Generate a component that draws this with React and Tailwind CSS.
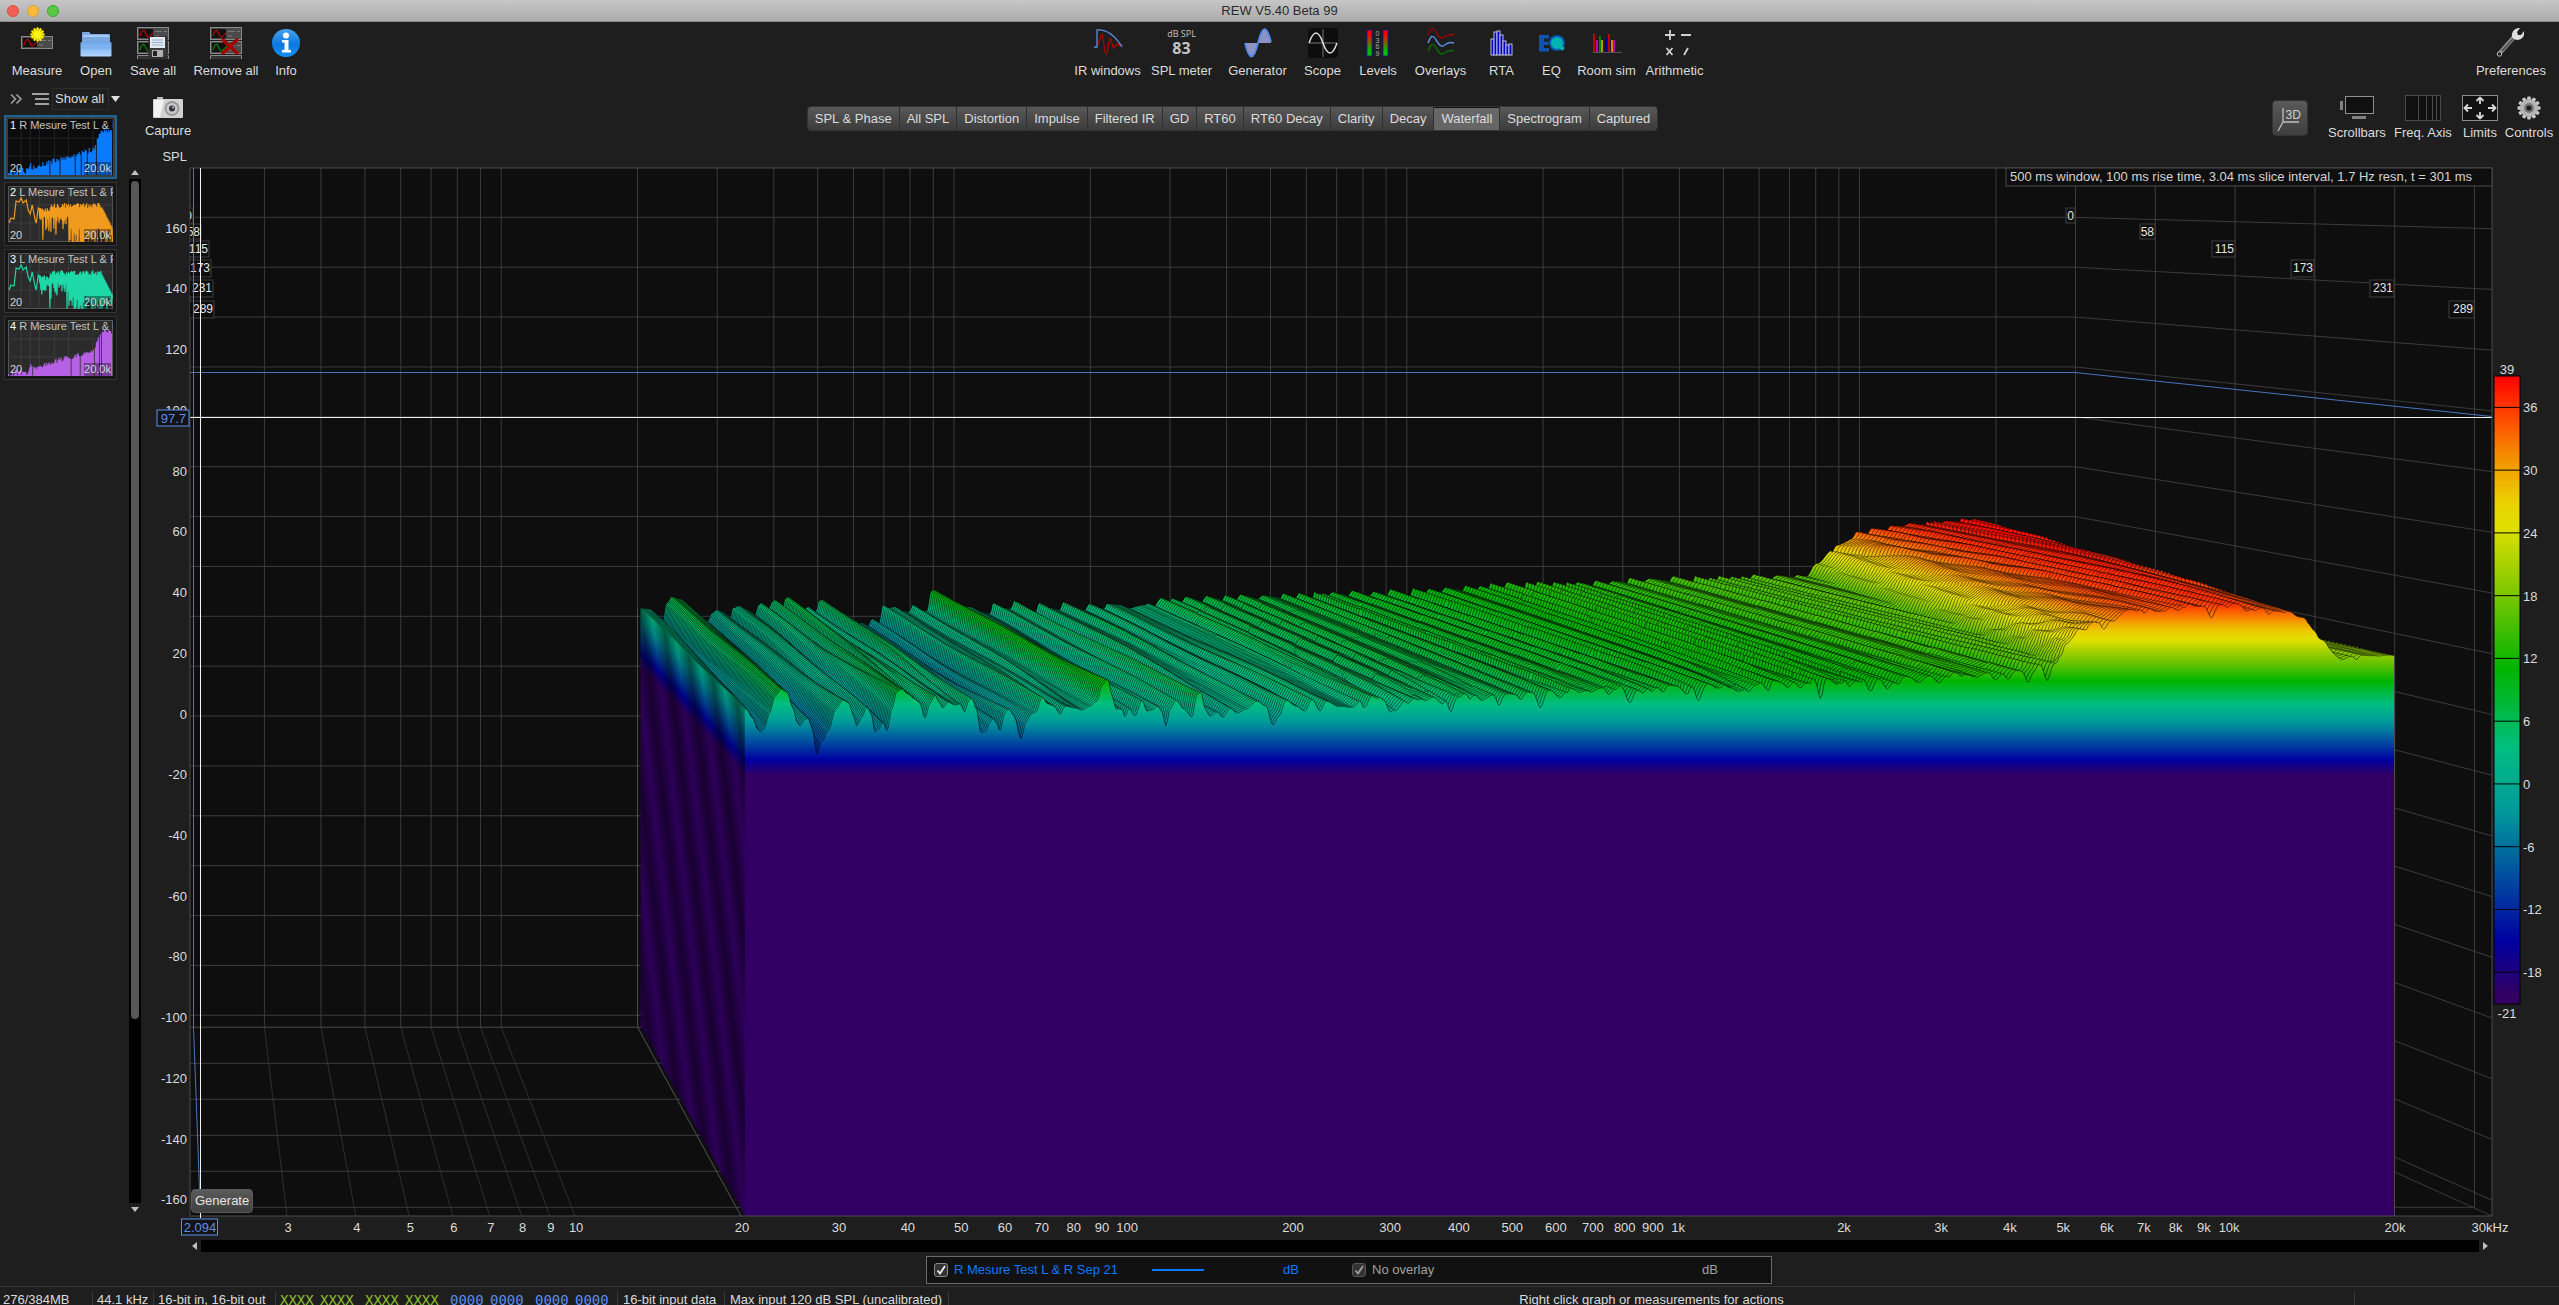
import React, { useMemo } from "react";

/* ---------- plot geometry ---------- */
const FRONT = { x0: 190, perDecade: 551, zero: 714.5, perDb: 3.036 };
const BACK = { x0: 184.7, perDecade: 452.8, zero: 616.3, perDb: 2.4935 };
const TOP = 168;
const BACK_FLOOR = 1027.3;
const FRONT_FLOOR = 1216;
const SLICES = 99;
const FIRST = 1.007;

const mix = (a, b, t) => a + (b - a) * t;
const slice = (t) => ({
  x0: mix(BACK.x0, FRONT.x0, t),
  perDecade: mix(BACK.perDecade, FRONT.perDecade, t),
  zero: mix(BACK.zero, FRONT.zero, t),
  perDb: mix(BACK.perDb, FRONT.perDb, t),
  floor: mix(BACK_FLOOR, FRONT_FLOOR, t),
});

function random(seed) {
  let s = seed;
  return () => {
    s = (s * 1664525 + 1013904223) % 4294967296;
    return s / 4294967296;
  };
}

const LEVEL_STOPS = [
  [39, "#ff0000"],
  [35, "#ff4a00"],
  [30, "#f2a400"],
  [27, "#ebd000"],
  [24.5, "#dfe000"],
  [18, "#78c600"],
  [11, "#00b400"],
  [3.5, "#00be80"],
  [-2.5, "#009a9a"],
  [-10, "#003fa0"],
  [-15, "#0000a0"],
  [-20, "#320064"],
];

/* first slice and last slice outlines, low frequencies */
const BACK_LINE = [
  [637, 608], [650, 609], [659, 622], [663, 621], [666, 604], [672, 597], [680, 599], [695, 612], [708, 621],
  [712, 613], [717, 610], [723, 612], [730, 620], [733, 608], [739, 606], [746, 609], [755, 616], [758, 606],
  [761, 603], [769, 609], [772, 602], [775, 600], [783, 608], [785, 599], [788, 597], [798, 607], [803, 611],
  [808, 607], [816, 612], [819, 601], [822, 600], [832, 606], [845, 620], [852, 624], [862, 623], [868, 626],
  [872, 619], [879, 623], [883, 605], [888, 608], [895, 607], [903, 611], [909, 612], [913, 605], [920, 610],
  [927, 611], [931, 591], [934, 590], [945, 598], [958, 608], [970, 607], [980, 612], [990, 614], [993, 603],
  [1003, 608], [1011, 609], [1014, 601], [1024, 608], [1035, 614], [1039, 603], [1050, 608], [1060, 610],
  [1063, 602], [1073, 607], [1085, 610], [1089, 604], [1104, 609], [1107, 604], [1120, 605], [1130, 609],
  [1145, 606], [1156, 609], [1162, 597], [1173, 600], [1185, 604],
];
const FRONT_LINE = [
  [741, 708], [746, 709], [753, 718], [757, 728], [760, 732], [764, 729], [770, 712], [775, 696], [781, 689],
  [787, 692], [793, 708], [797, 722], [800, 726], [804, 720], [808, 718], [812, 728], [817, 754], [821, 742],
  [829, 730], [835, 710], [843, 700], [849, 703], [853, 715], [857, 726], [861, 718], [867, 707], [871, 713],
  [875, 732], [879, 729], [883, 722], [887, 731], [892, 708], [897, 691], [902, 689], [908, 694], [915, 699],
  [920, 703], [925, 718], [930, 703], [935, 695], [939, 702], [943, 708], [948, 702], [955, 705], [960, 704],
  [965, 712], [968, 701], [972, 698], [976, 708], [981, 733], [986, 731], [990, 722], [993, 718], [997, 724],
  [1000, 731], [1005, 712], [1009, 709], [1014, 716], [1021, 739], [1026, 722], [1031, 714], [1036, 712],
  [1042, 697], [1048, 704], [1054, 706], [1060, 714], [1065, 706], [1075, 708], [1082, 710], [1090, 706],
  [1097, 701], [1102, 685], [1108, 679], [1112, 696], [1116, 709], [1122, 709], [1125, 717], [1129, 708],
  [1135, 716], [1142, 700], [1147, 711], [1152, 710], [1158, 706], [1162, 712], [1166, 726], [1170, 709],
  [1176, 700], [1184, 709], [1192, 717], [1197, 694], [1201, 692], [1205, 709], [1210, 716], [1217, 712],
  [1223, 717], [1230, 708], [1237, 713], [1246, 709], [1257, 701], [1266, 706], [1273, 725], [1279, 716],
  [1286, 700], [1296, 706], [1305, 711], [1312, 699], [1320, 711], [1326, 701], [1340, 707], [1352, 709],
  [1360, 702], [1364, 713], [1372, 694], [1379, 690], [1385, 702], [1391, 720], [1396, 708], [1402, 704],
];
/* [decade back, dB back, decade front, dB front], high frequencies */
const HIGH = [
  [2.15, 6.6, 2.15, 5.2],
  [2.38, 7.9, 2.38, 6.8],
  [2.6, 9.2, 2.6, 9],
  [3.0, 12.6, 3.0, 11.2],
  [3.3, 14.8, 3.3, 13.8],
  [3.58, 16.2, 3.386, 16.6],
  [3.605, 21, 3.395, 20],
  [3.64, 27, 3.405, 24],
  [3.7, 33.5, 3.43, 28],
  [3.76, 35.5, 3.47, 32],
  [3.81, 37, 3.54, 35],
  [3.88, 37.5, 3.62, 36],
  [3.92, 38.6, 3.7, 36.3],
  [3.963, 38.6, 3.805, 34.2],
  [3.975, 36, 3.835, 32],
  [3.985, 30, 3.855, 28],
  [3.99, 24, 3.868, 24.5],
  [3.993, 20, 3.9, 19.3],
  [4.0, 20, 4.0, 19.6],
];

function toLevels(points, g) {
  return points.map(([x, y]) => [(x - g.x0) / g.perDecade, (g.zero - y) / g.perDb]);
}

function sampler(points) {
  return (d) => {
    if (d <= points[0][0]) return points[0][1];
    for (let i = 1; i < points.length; i++) {
      if (d <= points[i][0]) {
        const [a, va] = points[i - 1];
        const [b, vb] = points[i];
        const u = (d - a) / (b - a);
        return mix(va, vb, u * u * (3 - 2 * u));
      }
    }
    return points[points.length - 1][1];
  };
}

function buildSurface() {
  const rnd = random(77);
  const back = sampler(toLevels(BACK_LINE, BACK));
  const front = sampler(toLevels(FRONT_LINE, FRONT));
  const N = 960;
  const ridge = new Array(N + 1).fill(0);
  const dips = new Array(N + 1).fill(0);
  let p = 0;
  while (p <= N) {
    const width = 5 + Math.floor(rnd() * 13);
    const height = 0.9 + rnd() * 2.3;
    for (let k = 0; k < width && p + k <= N; k++) {
      const u = k / width;
      ridge[p + k] = height * (u < 0.18 ? u / 0.18 : 1 - (u - 0.18) / 0.82) - height / 2;
    }
    p += width;
  }
  for (let i = 0; i <= N; i++) ridge[i] += (rnd() - 0.5) * 0.25;
  for (let c = 4; c < N; c += 5 + Math.floor(rnd() * 9)) {
    const depth = rnd() < 0.3 ? 3.5 + rnd() * 3.5 : 0.9 + rnd() * 2;
    const w = 1.6 + rnd() * 1.6;
    for (let i = Math.max(0, c - 8); i <= Math.min(N, c + 8); i++) {
      dips[i] -= depth * Math.exp(-(((i - c) / w) ** 2));
    }
  }
  const slices = [];
  for (let s = 0; s <= SLICES; s++) {
    const t = s / SLICES;
    const g = slice(t);
    const high = sampler(HIGH.map(([db, vb, df, vf]) => [mix(db, df, t), mix(vb, vf, t)]));
    const late = Math.pow(t, 2.2);
    const edge = Math.pow(t, 7);
    const shoulder = mix(3.963, 3.805, t);
    const pts = [];
    for (let i = 0; i <= N; i++) {
      const d = FIRST + ((4 - FIRST) * i) / N;
      const low = mix(back(d), front(d), late) + 2.2 * Math.sin(t * 6.3 + d * 26) * t * (1 - t);
      const k = Math.min(1, Math.max(0, (d - 2.08) / 0.14));
      let v = low;
      if (k > 0) {
        const fade = d > shoulder ? 0.25 : d > 3.4 ? 0.75 : 1;
        const drift = Math.round(6 * Math.sin(d * 9) * t);
        const r = ridge[Math.min(N, Math.max(0, i + drift))];
        v = mix(low, high(d) + (r * (1 - 0.45 * edge) + dips[i] * edge * 0.85) * fade, k);
      }
      pts.push(`${(g.x0 + g.perDecade * d).toFixed(1)},${(g.zero - g.perDb * v).toFixed(1)}`);
    }
    slices.push({ s, g, line: pts.join(" ") });
  }
  return slices;
}

const NAMES = [
  ["3", 3], ["4", 4], ["5", 5], ["6", 6], ["7", 7], ["8", 8], ["9", 9], ["10", 10], ["20", 20], ["30", 30],
  ["40", 40], ["50", 50], ["60", 60], ["70", 70], ["80", 80], ["90", 90], ["100", 100], ["200", 200],
  ["300", 300], ["400", 400], ["500", 500], ["600", 600], ["700", 700], ["800", 800], ["900", 900],
  ["1k", 1000], ["2k", 2000], ["3k", 3000], ["4k", 4000], ["5k", 5000], ["6k", 6000], ["7k", 7000],
  ["8k", 8000], ["9k", 9000], ["10k", 10000], ["20k", 20000],
];
const dec = (f) => Math.log10(f / 2);
const TIMES = [
  ["0", 2066, 208, 15, 9], ["58", 2140, 224, 15, 15], ["115", 2212, 241, 16, 23],
  ["173", 2291, 260, 17, 23], ["231", 2370, 280, 17, 24], ["289", 2449, 301, 17, 25],
];
const LEFT_EDGE = [193, 201, 209, 211, 213, 214];

function LevelScale() {
  const y = (v) => 376 + (39 - v) * 10.46;
  return (
    <g>
      <rect x="2494" y="376" width="26" height="628" fill="url(#scale)" stroke="#000" />
      {[36, 30, 24, 18, 12, 6, 0, -6, -12, -18].map((v) => (
        <g key={v}>
          <line x1="2494" x2="2520" y1={y(v)} y2={y(v)} stroke="#000" />
          <text x="2523" y={y(v) + 5} fill="#dcdcdc">{v}</text>
        </g>
      ))}
      <text x="2507" y="374" textAnchor="middle" fill="#dcdcdc">39</text>
      <text x="2507" y="1018" textAnchor="middle" fill="#dcdcdc">-21</text>
    </g>
  );
}

function Waterfall() {
  const slices = useMemo(buildSurface, []);
  const grid = "#3c3c3c";
  const levels = Array.from({ length: 17 }, (_, i) => 160 - i * 20);
  return (
    <svg viewBox="143 145 2416 1093" className="block h-auto w-full" role="img" aria-label="Waterfall plot" fontSize="13">
      <defs>
        <linearGradient id="scale" x1="0" x2="0" y1="0" y2="1">
          {LEVEL_STOPS.map(([v, c]) => (
            <stop key={v} offset={(39 - v) / 60} stopColor={c} />
          ))}
        </linearGradient>
        <linearGradient id="stops">
          {LEVEL_STOPS.map(([v, c]) => (
            <stop key={v} offset={(39 - v) / 60} stopColor={c} />
          ))}
        </linearGradient>
        {slices.map(({ s, g }) => (
          <linearGradient key={s} id={`level${s}`} gradientUnits="userSpaceOnUse" x1="0" x2="0" y1={g.zero - 39 * g.perDb} y2={g.zero + 21 * g.perDb} href="#stops" />
        ))}
        <linearGradient id="stripes" gradientUnits="userSpaceOnUse" x1="641" y1="700" x2="662" y2="697.5" spreadMethod="repeat">
          <stop offset="0" stopColor="#000" stopOpacity="0.12" />
          <stop offset="0.5" stopColor="#000" stopOpacity="0.52" />
          <stop offset="1" stopColor="#000" stopOpacity="0.12" />
        </linearGradient>
        <clipPath id="plot"><rect x="190" y="168" width="2302" height="1048" /></clipPath>
        <clipPath id="wall">
          <polygon points={`${slices.map(({ line }) => line.split(" ")[0]).join(" ")} 745,1216 640.5,1027`} />
        </clipPath>
      </defs>

      <rect x="190" y="168" width="2302" height="1048" fill="#0e0e0e" />
      <g clipPath="url(#plot)" stroke={grid} fill="none">
        {NAMES.map(([n, f]) => {
          const xb = BACK.x0 + BACK.perDecade * dec(f);
          return (
            <g key={n}>
              <line x1={xb} x2={xb} y1={TOP} y2={BACK_FLOOR} />
              <line x1={xb} x2={190 + 551 * dec(f)} y1={BACK_FLOOR} y2={FRONT_FLOOR} stroke="#303030" />
            </g>
          );
        })}
        {levels.map((v) => (
          <polyline
            key={v}
            points={`190,${BACK.zero - BACK.perDb * v} 2075,${BACK.zero - BACK.perDb * v} 2492,${FRONT.zero - FRONT.perDb * v}`}
          />
        ))}
        <polyline points="190,1027.3 2075,1027.3 2492,1216" />
        {[0, 1, 2, 3, 4, 5].map((i) => (
          <g key={i}>
            <line x1={2075.5 + 79.8 * i} x2={2075.5 + 79.8 * i} y1={TOP} y2={BACK_FLOOR + 36 * i} />
            <line x1="190" x2={2075.5 + 79.8 * i} y1={BACK_FLOOR + 36 * i} y2={BACK_FLOOR + 36 * i} />
          </g>
        ))}
        <polyline points="193.5,168 193.5,1027 200.5,1216" stroke="#4a74c0" />
        <polyline points="190,372.5 2075,372.5 2492,416.5" stroke="#4a74c0" />
      </g>

      <line x1="190" x2="2492" y1="417.5" y2="417.5" stroke="#f4f4f4" />

      <g clipPath="url(#plot)">
        {slices.map(({ s, g, line }) => (
          <g key={s}>
            <polygon points={`${g.x0 + g.perDecade * FIRST},${g.floor} ${line} ${g.x0 + 4 * g.perDecade},${g.floor}`} fill={`url(#level${s})`} />
            <polyline points={line} fill="none" stroke="#000" strokeOpacity="0.66" strokeWidth="0.8" />
          </g>
        ))}
        <g clipPath="url(#wall)">
          <rect x="630" y="590" width="120" height="630" fill="url(#stripes)" />
        </g>
        <line x1="637.5" y1="608" x2="637.5" y2="1027" stroke="#4a4a50" />
        <line x1="637.5" y1="1027" x2="741" y2="1216" stroke="#4a4a50" />
        <line x1="2394.5" y1="656" x2="2394.5" y2="1216" stroke="#4a4a50" />
      </g>

      <rect x="190" y="168" width="2302" height="1048" fill="none" stroke="#4a4a4a" />

      {TIMES.map(([label, x, y, h, w]) => (
        <g key={label}>
          <rect x={x} y={y} width={w} height={h} fill="#0e0e0e" stroke={grid} />
          <text x={x + w - 1} y={y + 12} textAnchor="end" fontSize="12" fill="#e4e4e4">{label}</text>
        </g>
      ))}
      <g clipPath="url(#plot)">
        {TIMES.map(([label, , y, h, w], i) => (
          <g key={label}>
            <rect x={LEFT_EDGE[i] - w} y={y} width={w} height={h} fill="#0e0e0e" stroke={grid} />
            <text x={LEFT_EDGE[i] - 1} y={y + 12} textAnchor="end" fontSize="12" fill="#e4e4e4">{label}</text>
          </g>
        ))}
        <line x1="193.5" x2="193.5" y1="168" y2="320" stroke="#4a74c0" />
      </g>
      <line x1="200.5" x2="200.5" y1="168" y2="1218" stroke="#f4f4f4" />

      <rect x="2006" y="168" width="486" height="18" fill="#0e0e0e" stroke="#4a4a4a" />
      <text x="2010" y="181" fill="#d4d4d4">500 ms window, 100 ms rise time, 3.04 ms slice interval, 1.7 Hz resn, t = 301 ms</text>

      <text x="187" y="161" textAnchor="end" fill="#dcdcdc">SPL</text>
      {levels.map((v) => (
        <text key={v} x="187" y={FRONT.zero - FRONT.perDb * v + 4} textAnchor="end" fill="#dcdcdc">{v}</text>
      ))}
      <rect x="157" y="410" width="32" height="16" fill="#141414" stroke="#5b8def" />
      <text x="186" y="423" textAnchor="end" fill="#5b8def">97.7</text>

      {NAMES.map(([n, f]) => (
        <text key={n} x={191 + 551 * dec(f)} y="1232" textAnchor="middle" fill="#dcdcdc">{n}</text>
      ))}
      <text x="2490" y="1232" textAnchor="middle" fill="#dcdcdc">30kHz</text>
      <rect x="181.5" y="1219" width="36" height="16" fill="#141414" stroke="#5b8def" />
      <text x="200" y="1232" textAnchor="middle" fill="#5b8def">2.094</text>
      <LevelScale />
    </svg>
  );
}

/* ---------- icons ---------- */
function Panel({ y, color }) {
  return (
    <g>
      <rect x="0.5" y={y + 0.5} width="31" height="12" fill="#4a4a4a" stroke="#8a8a8a" />
      <rect x="2" y={y + 2} width="14" height="9" fill="#111" />
      <path d={`M3 ${y + 9}c2-7 4-7 6-2s3 3 7-1`} fill="none" stroke={color} strokeWidth="1.2" />
      <path d={`M18 ${y + 4.5}h7m2 0h3M18 ${y + 9}h4`} stroke="#888" strokeWidth="0.8" />
    </g>
  );
}

const MeasureIcon = () => (
  <svg viewBox="0 0 32 32" className="h-8 w-8">
    <Panel y={9} color="#c00000" />
    <g stroke="#ffee00" strokeWidth="2.4" strokeLinecap="round" transform="translate(16.5 7.500)">
      {[0, 30, 60, 90, 120, 150].map((a) => <line key={a} x1="-6" x2="6" y1="0" y2="0" transform={`rotate(${a})`} />)}
    </g>
    <circle cx="16.5" cy="7.500" r="3.4" fill="#fff700" />
  </svg>
);
const OpenIcon = () => (
  <svg viewBox="0 0 32 32" className="h-8 w-8">
    <defs><linearGradient id="fold" x1="0" x2="0" y1="0" y2="1"><stop offset="0" stopColor="#6ea6ea" /><stop offset="0.5" stopColor="#8bbcf7" /><stop offset="1" stopColor="#b4d8ff" /></linearGradient></defs>
    <path d="M2 15V6q0-1 1-1h6q1 0 1.500 2H29q1 0 1 1v8z" fill="#7aa9e2" />
    <path d="M3 8h26v2H3z" fill="#a5c9f2" />
    <rect x="0.500" y="15" width="31" height="14.500" rx="1" fill="url(#fold)" />
    <path d="M1 21h30" stroke="#74a9ea" />
  </svg>
);
const SaveIcon = () => (
  <svg viewBox="0 0 32 32" className="h-8 w-8">
    <Panel y={0} color="#c00000" /><Panel y={14} color="#008a00" /><path d="M.5 32v-3.500h31V32" fill="#333" stroke="#8a8a8a" />
    <rect x="12" y="10" width="18" height="20" rx="1.500" fill="#3c3c3c" stroke="#222" />
    <rect x="13" y="10" width="15" height="11" fill="#e4eaf2" /><path d="M15 13h11M15 15.500h11M15 18h11" stroke="#7da3c8" strokeWidth="0.800" />
    <rect x="15" y="23" width="11" height="7" fill="#b0b0b0" /><rect x="16" y="24" width="4" height="5" fill="#222" />
  </svg>
);
const RemoveIcon = () => (
  <svg viewBox="0 0 32 32" className="h-8 w-8">
    <Panel y={0} color="#c00000" /><Panel y={14} color="#008a00" /><path d="M.5 32v-3.500h31V32" fill="#333" stroke="#8a8a8a" />
    <path d="M12 12L28 27M28 12L12 27" stroke="#a00000" strokeWidth="3.600" />
  </svg>
);
const InfoIcon = () => (
  <svg viewBox="0 0 32 32" className="h-8 w-8">
    <defs><linearGradient id="inf" x1="0" x2="0" y1="0" y2="1"><stop offset="0" stopColor="#4aa4ee" /><stop offset="0.550" stopColor="#0a78e0" /><stop offset="1" stopColor="#1590f4" /></linearGradient></defs>
    <circle cx="16" cy="16" r="14" fill="url(#inf)" />
    <circle cx="16" cy="8.500" r="3" fill="#fff" />
    <path d="M12 13h6.500v10h2.500v2.500h-9V23h2.500v-7.500H12z" fill="#fff" />
  </svg>
);
const IrIcon = () => (
  <svg viewBox="0 0 32 32" className="h-8 w-8" fill="none">
    <path d="M5 19L8 12 9 9q1-4 2 2l2 13q1 6 2.500 0l2-11q1-3 2 2l1.500 5q1 2 2-1l1.500-2q1-1 2 1.500l2-1 2 .5" stroke="#b00000" strokeWidth="1.300" />
    <path d="M2 20h3V3q14-1 25 17" stroke="#5f8fe0" strokeWidth="1.300" />
  </svg>
);
const SplIcon = () => (
  <span className="flex h-8 flex-col items-center font-['Open_Sans',sans-serif] text-[#c4c4c4]">
    <span className="pt-0.5 text-[9px] leading-[10px]">dB SPL</span>
    <span className="text-[16px] font-bold leading-[18px]">83</span>
  </span>
);
const GenIcon = () => (
  <svg viewBox="0 0 32 32" className="h-8 w-8">
    <path d="M3 16Q9.500 43 16 16T29 16z" fill="#8f93c4" />
    <path d="M3 16Q9.500 43 16 16T29 15" fill="none" stroke="#4f8bea" strokeWidth="1.800" />
  </svg>
);
const ScopeIcon = () => (
  <svg viewBox="0 0 32 32" className="h-8 w-8" fill="none">
    <rect x="1" y="1" width="30" height="30" rx="4" fill="#0d0d0d" />
    <path d="M16 2v28M2 16h28" stroke="#777" />
    <path d="M2 16Q9 -4 16 16T30 16" stroke="#e0e0e0" strokeWidth="1.500" />
  </svg>
);
const LevelsIcon = () => (
  <svg viewBox="0 0 32 32" className="h-8 w-8" fontSize="7" fill="#aaa" textAnchor="middle">
    <defs><linearGradient id="lev" x1="0" x2="0" y1="0" y2="1"><stop offset="0.150" stopColor="#ff0000" /><stop offset="0.800" stopColor="#00c000" /></linearGradient></defs>
    <rect x="5" y="3" width="5" height="26" fill="url(#lev)" stroke="#1818a0" strokeWidth="0.800" />
    <rect x="21" y="3" width="5" height="26" fill="url(#lev)" stroke="#1818a0" strokeWidth="0.800" />
    <text x="15.500" y="9">0</text><text x="15.500" y="15.500">3</text><text x="15.500" y="22">6</text><text x="15.500" y="28.500">9</text>
  </svg>
);
const OverlaysIcon = () => (
  <svg viewBox="0 0 32 32" className="h-8 w-8" fill="none" strokeWidth="1.400">
    {[["#a00000", 0], ["#5f8fe0", 8], ["#007000", 16]].map(([c, y]) => (
      <path key={c} d={`M3 ${y + 8}C6 ${y} 8 ${y} 10.500 ${y + 4}S15 ${y + 12} 18 ${y + 11}S22 ${y + 6} 29 ${y + 8}`} stroke={c} />
    ))}
  </svg>
);
const RtaIcon = () => (
  <svg viewBox="0 0 32 32" className="h-8 w-8" fill="#0000c8" stroke="#d0d0e0" strokeWidth="0.900">
    {[[5, 12], [8, 5], [11, 4], [14, 8], [17, 14], [20, 18], [23, 17]].map(([x, y]) => (
      <rect key={x} x={x} y={y} width="3" height={28 - y} />
    ))}
  </svg>
);
const EqIcon = () => (
  <svg viewBox="0 0 32 32" className="h-8 w-8">
    <path d="M3 8h10v3.500H8v3h4.500V18H8v3h5v3.500H3z" fill="#0a55b0" />
    <circle cx="21" cy="16" r="8" fill="#0a55b0" /><circle cx="21" cy="16" r="6" fill="#00b4b4" />
    <path d="M22 19l4 5 3-3-4-3z" fill="#00b4b4" />
  </svg>
);
const RoomIcon = () => (
  <svg viewBox="0 0 32 32" className="h-8 w-8">
    {[["#c00000", 2, 7], ["#c000c0", 5, 13], ["#008000", 8, 9], ["#c09000", 10, 13], ["#0000a0", 14, 11], ["#c00000", 17, 7], ["#c09000", 20, 13], ["#c000c0", 22, 13]].map(([c, x, y]) => (
      <rect key={x} x={x} y={y} width="2" height={25 - y} fill={c} />
    ))}
    <path d="M2 25.500h29" stroke="#555" />
  </svg>
);
const ArithIcon = () => (
  <svg viewBox="0 0 32 32" className="h-8 w-8" stroke="#d0d0d0" strokeWidth="1.800">
    <path d="M6 8h10M11 3v10M22 8h10M7.500 21l6 7M13.500 21l-6 7M29 21l-4 7" />
  </svg>
);
const WrenchIcon = () => (
  <svg viewBox="0 0 32 32" className="h-8 w-8">
    <path d="M4 27L19 10" stroke="#8c8c8c" strokeWidth="4.200" strokeLinecap="round" />
    <path d="M7 24L18 12" stroke="#4a4a4a" strokeWidth="1.600" />
    <circle cx="4.500" cy="27" r="2.200" fill="#222" stroke="#bbb" />
    <path d="M17 10q-1-7 6-9l2 0-3 4 1 3 3 0 3-4q1 8-6 9-4 0-6-3z" fill="#dedede" />
  </svg>
);
const CameraIcon = () => (
  <svg viewBox="0 0 32 24" className="h-6 w-8">
    <rect x="5" y="1" width="6" height="3" fill="#bbb" />
    <rect x="1" y="3" width="30" height="19" rx="1" fill="#d2d2d2" /><path d="M2 4h10L8 21H2z" fill="#f2f2f2" />
    <circle cx="20" cy="12.500" r="7.500" fill="#999" /><circle cx="20" cy="12.500" r="5.500" fill="#c8c8c8" />
    <circle cx="20" cy="12.500" r="3" fill="#333" /><circle cx="21" cy="11.500" r="1" fill="#b8c8ff" />
  </svg>
);
const ScrollIcon = () => (
  <svg viewBox="0 0 34 26" className="h-[26px] w-[34px]">
    <rect x="5.500" y="1.500" width="28" height="17" fill="#111" stroke="#909090" />
    <rect x="0" y="6" width="3" height="9" fill="#808080" /><rect x="12" y="21" width="14" height="3" fill="#808080" />
  </svg>
);
const FreqIcon = () => (
  <svg viewBox="0 0 36 26" className="h-[26px] w-9" stroke="#4a4a4a">
    <rect x="0.500" y="0.500" width="35" height="25" fill="#111" /><path d="M13.500 0v26M21.500 0v26M27.500 0v26M31.500 0v26" />
  </svg>
);
const LimitsIcon = () => (
  <svg viewBox="0 0 36 26" className="h-[26px] w-9" stroke="#d8d8d8" strokeWidth="1.800" fill="none">
    <rect x="0.500" y="0.500" width="35" height="25" fill="#111" stroke="#8c8c8c" strokeWidth="1" />
    <path d="M18 9V3m-3.500 3L18 2.500 21.500 6M18 17v6m-3.500-3l3.500 3.500 3.500-3.500M10 13H3m3-3.500L2.500 13 6 16.500M26 13h7m-3-3.500l3.500 3.500-3.500 3.500" />
  </svg>
);
const GearIcon = () => (
  <svg viewBox="0 0 24 26" className="h-[26px] w-6">
    <g transform="translate(12 13)" fill="#c8c8c8">
      {[0, 30, 60, 90, 120, 150].map((a) => <rect key={a} x="-1.800" y="-11.500" width="3.600" height="23" rx="1" transform={`rotate(${a})`} />)}
      <circle r="9" fill="#b4b4b4" /><circle r="5" fill="#777" /><circle r="2.600" fill="#1c1c1c" />
    </g>
  </svg>
);

function Tool({ label, icon: Icon, className = "" }) {
  return (
    <button type="button" className={`flex flex-col items-center whitespace-nowrap pt-[5px] ${className}`}>
      <Icon />
      <span className="pt-1 leading-4">{label}</span>
    </button>
  );
}

function ViewTool({ label, icon: Icon, className = "" }) {
  return (
    <button type="button" className={`flex flex-col items-center whitespace-nowrap pt-[13px] ${className}`}>
      <Icon />
      <span className="pt-1 leading-4">{label}</span>
    </button>
  );
}

/* ---------- measurement list ---------- */
function thumbPath(kind, seed) {
  const r = random(seed);
  let d = "";
  if (kind === "rise") {
    for (let x = 0; x < 103; x++) {
      let h = x < 20 ? r() * 7 : 4 + (x - 20) * 0.3 + r() * 5;
      if (x === 22) h = 12;
      if (x > 84) h = 23 + (x - 84) * 2.6 + r() * 4;
      if (x > 92) h = 42 + r() * 4;
      d += `M${x + 0.5} 56V${(56 - h).toFixed(1)}`;
      if (r() < 0.1) x++;
    }
    return d;
  }
  d = "M1 37L3 32 6 33 8 15 11 16 13 12 15 17 18 14 20 24 22 28 24 19 27 34 28 37 30 22";
  for (let x = 31; x < 104; x++) {
    const top = x > 92 ? 19 + (x - 92) * 2 : 17 + r() * 5 + (x < 42 ? 5 : 0);
    const depth = x < 60 ? 30 + r() * r() * 30 : 42 + r() * 24;
    d += `L${x} ${top.toFixed(1)}L${x + 0.5} ${Math.min(56, depth).toFixed(1)}`;
  }
  return d;
}

const MEASUREMENTS = [
  { n: 1, side: "R", kind: "rise", color: "#0a7aff", seed: 5 },
  { n: 2, side: "L", kind: "full", color: "#f09a1e", seed: 9 },
  { n: 3, side: "L", kind: "full", color: "#1ed8a8", seed: 12 },
  { n: 4, side: "R", kind: "rise", color: "#b660e6", seed: 31 },
];

function Measurement({ m, selected }) {
  return (
    <button
      type="button"
      className={`h-16 w-[113px] text-left ${selected ? "border-2 border-[#1c6496] bg-[#3c3c3c] p-0.5" : "border border-[#333333] bg-[#161616] p-[3px]"}`}
    >
      <span className={`relative block h-full overflow-hidden ${selected ? "bg-[#0c0c0c]" : "bg-[#2b2b2b] ring-1 ring-inset ring-[#555555]"}`}>
        <svg viewBox="0 0 104 56" preserveAspectRatio="none" className="block h-full w-full" fill="none">
          <path d="M13 0v56M22 0v56M31 0v56M46 0v56M60 0v56M84 0v56M0 19h104M0 37h104" stroke={selected ? "#222222" : "#3c3c3c"} />
          <path d={thumbPath(m.kind, m.seed)} stroke={m.color} strokeWidth="1.2" />
        </svg>
        <span className="absolute left-0.5 top-0 whitespace-nowrap text-[11px] leading-[13px] text-[#c4c4c4]">
          <b className="font-normal text-white">{m.n}</b> {m.side} Mesure Test L &amp; R
        </span>
        <span className="absolute inset-x-0.5 bottom-0 flex justify-between text-[11px] leading-[13px] text-[#d4d4d4]">
          <span>20</span>
          <span className="bg-black/35">20.0k</span>
        </span>
      </span>
    </button>
  );
}

const TABS = ["SPL & Phase", "All SPL", "Distortion", "Impulse", "Filtered IR", "GD", "RT60", "RT60 Decay", "Clarity", "Decay", "Waterfall", "Spectrogram", "Captured"];

export default function App() {
  return (
    <div className="flex h-screen flex-col overflow-hidden bg-[#1e1e1e] font-['Liberation_Sans',Arial,sans-serif] text-[13px] text-[#dcdcdc]">
      <header className="flex h-[22px] shrink-0 items-center justify-between border-b border-[#8a8a8a] bg-gradient-to-b from-[#c6c6c6] to-[#acacac] px-[7px]">
        <div className="flex w-[52px] gap-2">
          <button type="button" aria-label="Close" className="h-3 w-3 rounded-full border border-[#d8493f] bg-[#f35f57]" />
          <button type="button" aria-label="Minimise" className="h-3 w-3 rounded-full border border-[#dd9e33] bg-[#fabb3a]" />
          <button type="button" aria-label="Zoom" className="h-3 w-3 rounded-full border border-[#3fa535] bg-[#58c846]" />
        </div>
        <h1 className="leading-4 text-[#2a2a2a]">REW V5.40 Beta 99</h1>
        <div className="w-[52px]" />
      </header>

      <nav className="flex h-[60px] shrink-0 justify-between">
        <div className="flex pl-[7px] pr-2">
          <Tool label="Measure" icon={MeasureIcon} className="w-[60px]" />
          <Tool label="Open" icon={OpenIcon} className="w-[58px]" />
          <Tool label="Save all" icon={SaveIcon} className="w-14" />
          <Tool label="Remove all" icon={RemoveIcon} className="w-[90px]" />
          <Tool label="Info" icon={InfoIcon} className="w-[30px]" />
        </div>
        <div className="flex">
          <Tool label="IR windows" icon={IrIcon} className="w-[76px]" />
          <Tool label="SPL meter" icon={SplIcon} className="w-[72px]" />
          <Tool label="Generator" icon={GenIcon} className="w-20" />
          <Tool label="Scope" icon={ScopeIcon} className="w-[50px]" />
          <Tool label="Levels" icon={LevelsIcon} className="w-[61px]" />
          <Tool label="Overlays" icon={OverlaysIcon} className="w-16" />
          <Tool label="RTA" icon={RtaIcon} className="w-[58px]" />
          <Tool label="EQ" icon={EqIcon} className="w-[42px]" />
          <Tool label="Room sim" icon={RoomIcon} className="w-[68px]" />
          <Tool label="Arithmetic" icon={ArithIcon} className="w-[68px]" />
        </div>
        <Tool label="Preferences" icon={WrenchIcon} className="mr-1.5 w-[84px]" />
      </nav>

      <div className="flex min-h-0 flex-1">
        <aside className="flex w-[143px] shrink-0 flex-col">
          <div className="flex h-[33px] items-center pl-2">
            <button type="button" aria-label="Expand list" className="w-6">
              <svg viewBox="0 0 16 12" className="h-3 w-4" fill="none" stroke="#a0a0a0" strokeWidth="1.6"><path d="M3 1.500l4.500 4.500L3 10.500M8.500 1.500l4.500 4.500-4.500 4.500" /></svg>
            </button>
            <svg viewBox="0 0 18 14" className="h-3.5 w-[18px]" stroke="#a0a0a0" strokeWidth="1.800"><path d="M0 2h17M3 7h14M3 12h14" /></svg>
            <label className="flex items-center">
              <span className="sr-only">Measurements shown</span>
              <select className="ml-0.5 h-[22px] w-[57px] appearance-none border border-[#2c2c2c] bg-transparent pl-0.5">
                <option>Show all</option>
              </select>
              <svg viewBox="0 0 9 6" className="ml-0.5 h-1.5 w-[9px]" fill="#e0e0e0"><path d="M0 0h9L4.500 6z" /></svg>
            </label>
          </div>
          <div className="flex min-h-0 flex-1">
            <div className="flex flex-col gap-[3px] pl-1">
              {MEASUREMENTS.map((m) => <Measurement key={m.n} m={m} selected={m.n === 1} />)}
            </div>
            <div className="ml-3 flex w-3 flex-col items-center pb-[74px] pt-[55px]">
              <svg viewBox="0 0 8 5" className="h-[5px] w-2" fill="#c0c0c0"><path d="M0 5h8L4 0z" /></svg>
              <div className="mb-1 mt-1 flex w-full flex-1 flex-col items-center bg-black pt-0.5">
                <div className="h-[82%] w-2 rounded-full bg-[#575757]" />
              </div>
              <svg viewBox="0 0 8 5" className="h-[5px] w-2" fill="#c0c0c0"><path d="M0 0h8L4 5z" /></svg>
            </div>
          </div>
        </aside>

        <main className="min-w-0 flex-1">
          <div className="flex h-[63px] justify-between">
            <button type="button" className="flex w-[50px] flex-col items-center pt-3.5">
              <CameraIcon />
              <span className="pt-[3px] leading-4">Capture</span>
            </button>
            <div className="mt-6 flex h-[25px] rounded border border-[#333333] bg-gradient-to-b from-[#585858] to-[#3c3c3c]" role="tablist">
              {TABS.map((t) => (
                <button
                  key={t}
                  type="button"
                  role="tab"
                  aria-selected={t === "Waterfall"}
                  className={`whitespace-nowrap border-r border-[#303030] px-[7px] last:border-r-0 ${t === "Waterfall" ? "bg-[#666666] shadow-[inset_0_1px_0_#111111]" : ""}`}
                >
                  {t}
                </button>
              ))}
            </div>
            <div className="flex">
              <button type="button" aria-label="3D view" className="mr-4 mt-[18px] h-9 w-9 rounded border border-[#333333] bg-gradient-to-b from-[#5a5a5a] to-[#3e3e3e]">
                <svg viewBox="0 0 34 34" className="h-full w-full" fill="none" stroke="#c0c0c0" strokeWidth="1.300">
                  <path d="M10 7v14h16M10 21l-5 9" />
                  <text x="12.500" y="18" fontSize="12" fill="#d0d0d0" stroke="none">3D</text>
                </svg>
              </button>
              <ViewTool label="Scrollbars" icon={ScrollIcon} className="w-[66px]" />
              <ViewTool label="Freq. Axis" icon={FreqIcon} className="w-[66px]" />
              <ViewTool label="Limits" icon={LimitsIcon} className="w-12" />
              <ViewTool label="Controls" icon={GearIcon} className="mr-[5px] w-[50px]" />
            </div>
          </div>
          <div className="relative">
            <Waterfall />
            <button type="button" className="absolute bottom-[25px] left-12 h-6 rounded border border-[#5a5a5a] bg-gradient-to-b from-[#5a5a5a] to-[#404040] px-[3px] leading-5 text-[#e4e4e4]">
              Generate
            </button>
          </div>
          <div className="flex h-4 items-center pl-[49px] pr-[71px]">
            <svg viewBox="0 0 5 8" className="mr-1 h-2 w-[5px]" fill="#c0c0c0"><path d="M5 0v8L0 4z" /></svg>
            <div className="h-3 flex-1 bg-black" />
            <svg viewBox="0 0 5 8" className="ml-1 h-2 w-[5px]" fill="#c0c0c0"><path d="M0 0v8l5-4z" /></svg>
          </div>
          <div className="flex justify-center pr-1 pt-0.5">
            <div className="flex h-7 w-[846px] items-center border border-[#6a6a6a] bg-[#111111] pl-[7px]">
              <label className="flex w-[218px] items-center text-[#0a7aff]">
                <Check />
                R Mesure Test L &amp; R Sep 21
              </label>
              <span className="h-0.5 w-[52px] bg-[#0a7aff]" />
              <span className="ml-[79px] w-[69px] text-[#0a7aff]">dB</span>
              <label className="flex flex-1 items-center text-[#a0a0a0]">
                <Check dim />
                No overlay
              </label>
              <span className="mr-[53px] text-[#a0a0a0]">dB</span>
            </div>
          </div>
        </main>
      </div>

      <footer className="flex h-[19px] shrink-0 overflow-hidden border-t border-[#333333] pt-1 leading-[18px]">
        <span className="h-5 w-[93px] shrink-0 border-r border-[#3a3a3a] pl-[3px]">276/384MB</span>
        <span className="h-5 w-[61px] shrink-0 whitespace-nowrap border-r border-[#3a3a3a] pl-1">44.1 kHz</span>
        <span className="h-5 w-[122px] shrink-0 whitespace-nowrap border-r border-[#3a3a3a] pl-1">16-bit in, 16-bit out</span>
        <span className="flex h-5 w-[342px] shrink-0 border-r border-[#3a3a3a] pl-1 font-['DejaVu_Sans_Mono',monospace] text-[14px] text-[#8fbf2f]">
          <span className="w-10">XXXX</span><span className="w-[45px]">XXXX</span><span className="w-10">XXXX</span><span className="w-[45px]">XXXX</span>
          <span className="flex text-[#5b8def]">
            <span className="w-10">0000</span><span className="w-[45px]">0000</span><span className="w-10">0000</span><span>0000</span>
          </span>
        </span>
        <span className="h-5 w-[107px] shrink-0 whitespace-nowrap border-r border-[#3a3a3a] pl-[5px]">16-bit input data</span>
        <span className="h-5 w-[224px] shrink-0 whitespace-nowrap border-r border-[#3a3a3a] pl-[5px]">Max input 120 dB SPL (uncalibrated)</span>
        <span className="h-5 flex-1 border-r border-[#3a3a3a] text-center">Right click graph or measurements for actions</span>
        <span className="h-5 w-[204px] shrink-0" />
      </footer>
    </div>
  );
}

function Check({ dim = false }) {
  return (
    <span className="relative mr-1.5 block h-3.5 w-3.5">
      <input type="checkbox" defaultChecked className={`block h-3.5 w-3.5 appearance-none rounded-[3px] border bg-[#333333] ${dim ? "border-[#555555]" : "border-[#8a8a8a]"}`} />
      <svg viewBox="0 0 14 14" className="pointer-events-none absolute inset-0 h-3.5 w-3.5" fill="none" stroke={dim ? "#a0a0a0" : "#f0f0f0"} strokeWidth="1.800">
        <path d="M3.500 7.500l2.500 3L11 3" />
      </svg>
    </span>
  );
}
